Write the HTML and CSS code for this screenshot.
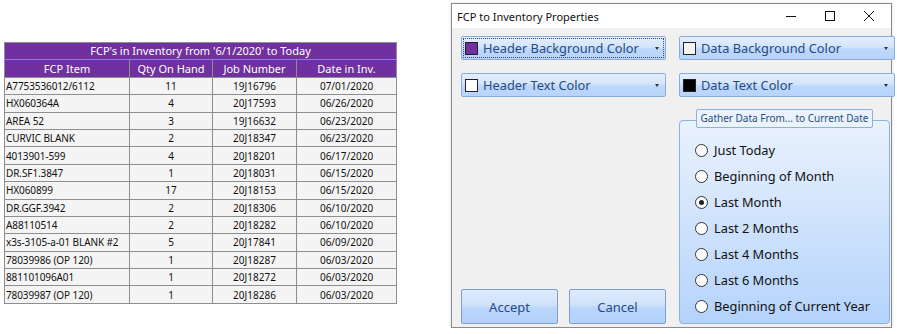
FILE: index.html
```html
<!DOCTYPE html>
<html lang="en">
<head>
    <meta charset="UTF-8">
    <title>FCP to Inventory</title>
    <link rel="stylesheet" href="styles.css">
</head>
<body>

<div class="page">

    <div class="report">
        <table class="fcp-table">
            <colgroup>
                <col class="c-item">
                <col class="c-qty">
                <col class="c-job">
                <col class="c-date">
            </colgroup>
            <thead>
                <tr><th colspan="4" class="title">FCP's in Inventory from '6/1/2020' to Today</th></tr>
                <tr>
                    <th>FCP Item</th>
                    <th>Qty On Hand</th>
                    <th>Job Number</th>
                    <th>Date in Inv.</th>
                </tr>
            </thead>
            <tbody>
                <tr><td>A7753536012/6112</td><td>11</td><td>19J16796</td><td>07/01/2020</td></tr>
                <tr><td>HX060364A</td><td>4</td><td>20J17593</td><td>06/26/2020</td></tr>
                <tr><td>AREA 52</td><td>3</td><td>19J16632</td><td>06/23/2020</td></tr>
                <tr><td>CURVIC BLANK</td><td>2</td><td>20J18347</td><td>06/23/2020</td></tr>
                <tr><td>4013901-599</td><td>4</td><td>20J18201</td><td>06/17/2020</td></tr>
                <tr><td>DR.SF1.3847</td><td>1</td><td>20J18031</td><td>06/15/2020</td></tr>
                <tr><td>HX060899</td><td>17</td><td>20J18153</td><td>06/15/2020</td></tr>
                <tr><td>DR.GGF.3942</td><td>2</td><td>20J18306</td><td>06/10/2020</td></tr>
                <tr><td>A88110514</td><td>2</td><td>20J18282</td><td>06/10/2020</td></tr>
                <tr><td>x3s-3105-a-01 BLANK #2</td><td>5</td><td>20J17841</td><td>06/09/2020</td></tr>
                <tr><td>78039986 (OP 120)</td><td>1</td><td>20J18287</td><td>06/03/2020</td></tr>
                <tr><td>881101096A01</td><td>1</td><td>20J18272</td><td>06/03/2020</td></tr>
                <tr><td>78039987 (OP 120)</td><td>1</td><td>20J18286</td><td>06/03/2020</td></tr>
            </tbody>
        </table>
    </div>

    <div class="window">
        <div class="titlebar">
            <span class="win-title">FCP to Inventory Properties</span>
            <div class="win-controls">
                <svg width="12" height="12" viewBox="0 0 12 12"><path d="M1 6.5h10" stroke="#111" stroke-width="1"/></svg>
                <svg width="12" height="12" viewBox="0 0 12 12"><rect x="1.5" y="1.5" width="9" height="9" fill="none" stroke="#111" stroke-width="1"/></svg>
                <svg width="12" height="12" viewBox="0 0 12 12"><path d="M1 1l10 10M11 1L1 11" stroke="#111" stroke-width="1"/></svg>
            </div>
        </div>

        <div class="win-body">
            <div class="col-left">
                <div class="combo focused">
                    <span class="swatch" style="background:#7030a0"></span>
                    <span class="combo-text">Header Background Color</span>
                    <span class="arrow"></span>
                </div>
                <div class="combo">
                    <span class="swatch" style="background:#ffffff"></span>
                    <span class="combo-text">Header Text Color</span>
                    <span class="arrow"></span>
                </div>
                <div class="buttons">
                    <button class="btn">Accept</button>
                    <button class="btn">Cancel</button>
                </div>
            </div>

            <div class="col-right">
                <div class="combo">
                    <span class="swatch" style="background:#f4f4f4"></span>
                    <span class="combo-text">Data Background Color</span>
                    <span class="arrow"></span>
                </div>
                <div class="combo">
                    <span class="swatch" style="background:#000000"></span>
                    <span class="combo-text">Data Text Color</span>
                    <span class="arrow"></span>
                </div>

                <div class="group">
                    <div class="legend">Gather Data From... to Current Date</div>
                    <label class="radio"><span class="dot"></span>Just Today</label>
                    <label class="radio"><span class="dot"></span>Beginning of Month</label>
                    <label class="radio"><span class="dot checked"></span>Last Month</label>
                    <label class="radio"><span class="dot"></span>Last 2 Months</label>
                    <label class="radio"><span class="dot"></span>Last 4 Months</label>
                    <label class="radio"><span class="dot"></span>Last 6 Months</label>
                    <label class="radio"><span class="dot"></span>Beginning of Current Year</label>
                </div>
            </div>
        </div>
    </div>

</div>

</body>
</html>
```

FILE: styles.css
```css
body {
    margin: 0;
    background: #ffffff;
    font-family: "Noto Sans", "Open Sans", sans-serif;
}
.page {
    display: flex;
    align-items: flex-start;
}

/* report table */
.report {
    padding: 42px 0 0 4px;
    width: 447px;
}
.fcp-table {
    border-collapse: collapse;
    table-layout: fixed;
    width: 392px;
    font-size: 10px;
    color: #111;
}
.fcp-table th,
.fcp-table td {
    border: 1px solid #8e8e8e;
    padding: 0 1px;
    height: 16.4px;
    line-height: 14px;
    white-space: nowrap;
    overflow: hidden;
}
.fcp-table th {
    background: #7030a0;
    color: #fff;
    font-weight: normal;
    font-size: 11px;
}
.fcp-table td {
    background: #f4f4f4;
    text-align: center;
}
.fcp-table td:first-child {
    text-align: left;
    letter-spacing: -0.1px;
}
.c-item { width: 125px; }
.c-qty { width: 83px; }
.c-job { width: 84px; }
.c-date { width: 100px; }

/* dialog window */
.window {
    width: 439px;
    height: 323px;
    margin-top: 3px;
    border: 1px solid #8a8a8a;
    background: #f0f0f0;
    box-shadow: 0 0 3px rgba(0, 0, 0, 0.15);
    display: flex;
    flex-direction: column;
}
.titlebar {
    height: 25px;
    background: #fff;
    display: flex;
    align-items: center;
    justify-content: space-between;
    padding-left: 5px;
}
.win-title {
    font-size: 11px;
    color: #111;
}
.win-controls {
    display: flex;
    gap: 27px;
    padding-right: 16px;
}
.win-body {
    flex: 1;
    display: flex;
    gap: 13px;
    padding: 8px 1px 3px 9px;
}
.col-left,
.col-right {
    display: flex;
    flex-direction: column;
    gap: 13px;
}
.col-left { width: 205px; }
.col-right { width: 211px; }
.col-right .combo { width: 205px; }

.combo {
    height: 22px;
    border: 1px solid #8aaedc;
    border-radius: 2px;
    background: linear-gradient(#e4eefb 0%, #d4e5fb 45%, #bcd8fb 55%, #b6d4fa 100%);
    display: flex;
    align-items: center;
    padding: 0 6px 0 3px;
    position: relative;
    color: #2a4b82;
    font-size: 12.8px;
}
.combo.focused::after {
    content: "";
    position: absolute;
    inset: 1px;
    border: 1px dotted #3a4d6e;
}
.swatch {
    width: 11px;
    height: 11px;
    border: 1px solid #222;
    margin-right: 5px;
    flex: none;
}
.combo-text {
    flex: 1;
    white-space: nowrap;
}
.arrow {
    width: 0;
    height: 0;
    border-left: 2.5px solid transparent;
    border-right: 2.5px solid transparent;
    border-top: 3px solid #333;
}

.buttons {
    margin-top: auto;
    display: flex;
    justify-content: space-between;
}
.btn {
    width: 97px;
    height: 35px;
    border: 1px solid #7e9ecb;
    border-radius: 2px;
    background: linear-gradient(#dfebfb 0%, #cfe2fb 45%, #bad6fb 55%, #b2d1fa 100%);
    color: #2a4b82;
    font-family: "Noto Sans", "Open Sans", sans-serif;
    font-size: 13px;
    padding: 0;
}

/* group box */
.group {
    margin-top: 10px;
    border: 1px solid #8cb0df;
    border-radius: 4px;
    background: linear-gradient(#eaf2fd, #b4d3fb);
    display: flex;
    flex-direction: column;
    padding: 0 0 4px 15px;
    flex: 1;
}
.legend {
    align-self: center;
    margin: -12px 0 9px -15px;
    border: 1px solid #8cb0df;
    border-radius: 2px;
    background: #eaf2fd;
    font-size: 10px;
    color: #2a4b82;
    padding: 0 4px;
    height: 17px;
    line-height: 17px;
    white-space: nowrap;
}
.radio {
    height: 26px;
    display: flex;
    align-items: center;
    font-size: 12.8px;
    color: #111;
}
.dot {
    width: 11px;
    height: 11px;
    border: 1px solid #333;
    border-radius: 50%;
    background: #fff;
    margin-right: 6px;
    flex: none;
    display: flex;
    align-items: center;
    justify-content: center;
}
.dot.checked::before {
    content: "";
    width: 5px;
    height: 5px;
    border-radius: 50%;
    background: #222;
}
```
